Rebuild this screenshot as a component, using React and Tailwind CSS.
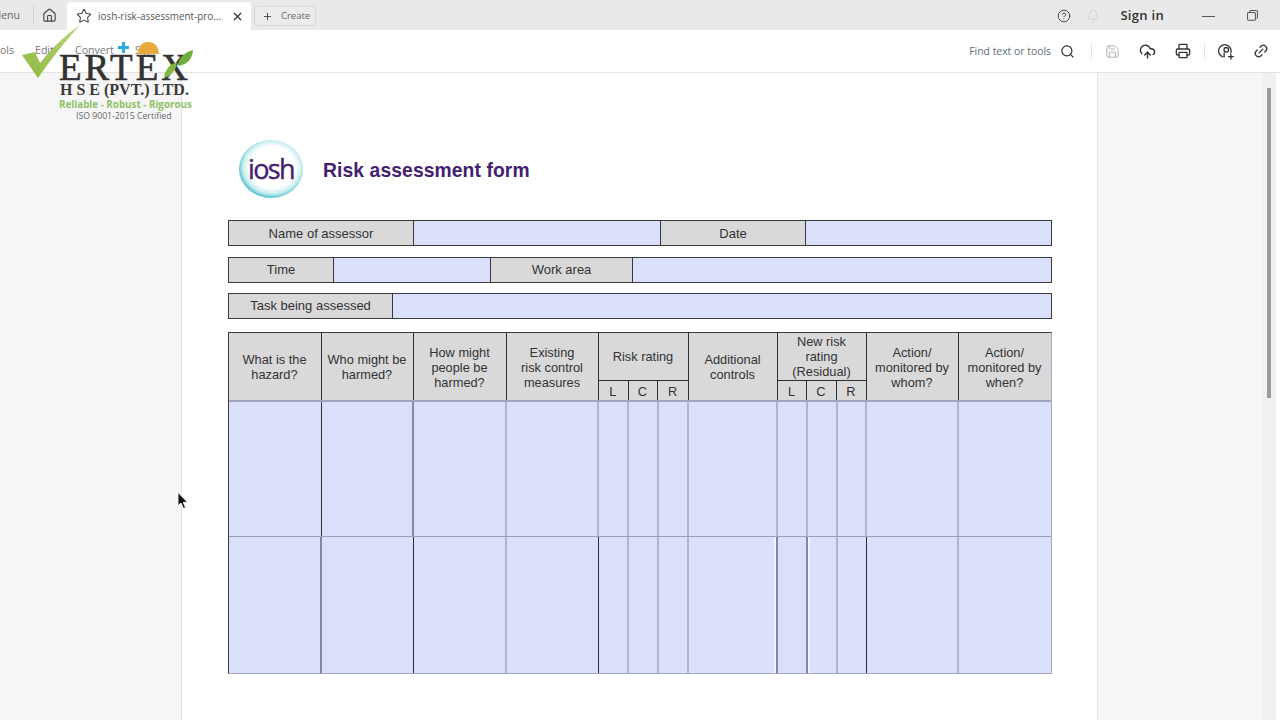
import React from 'react';
import { House, Star, X, Plus, CircleHelp, Bell, Search, Save, CloudUpload, Printer, Link2 } from 'lucide-react';

const headCls = 'flex items-center justify-center bg-[#d9d9d9] text-center border-r border-[#2f2f2f] pt-[1px] pr-[1px] leading-[15px] text-[12.8px] text-[#333]';
const labelCls = 'flex items-center justify-center bg-[#d9d9d9] text-[13px] text-[#333] h-full';
const fieldCls = 'bg-[#dadffa] h-full';

function FormRow({ cols, className, children }) {
  return (
    <div className={`border border-[#3a3a3a] h-[26px] grid ${cols} ${className}`}>
      {children}
    </div>
  );
}

function Toolbar() {
  return (
    <div className="h-[43px] flex items-center bg-white border-b border-[#e3e3e3] text-[10.6px] text-[#777] shrink-0">
      <span className="w-[35px] text-right pr-[21px] overflow-hidden whitespace-nowrap">ols</span>
      <span className="w-[40px]">Edit</span>
      <span className="w-[60px]">Convert</span>
      <span>Sign</span>
      <div className="ml-auto flex items-center text-[#555]">
        <span className="text-[10.4px] pt-[1px] text-[#5f6b73]">Find text or tools</span>
        <Search className="w-[15px] h-[15px] ml-[9px] text-[#333]" strokeWidth={2} />
        <div className="w-px h-[15px] bg-[#e2e2e2] ml-[16px]" />
        <Save className="w-[15px] h-[15px] ml-[13px] text-[#b4b4b4]" strokeWidth={1.6} />
        <CloudUpload className="w-[17px] h-[17px] ml-[19px] text-[#333]" strokeWidth={2} />
        <Printer className="w-[16px] h-[16px] ml-[19px] text-[#333]" strokeWidth={2} />
        <div className="w-px h-[15px] bg-[#e2e2e2] ml-[13px]" />
        <svg viewBox="0 0 18 18" className="w-[17px] h-[17px] ml-[13px]" fill="none" stroke="#333" strokeWidth="1.4" strokeLinecap="round">
          <path d="M13.5 10.5A6.6 6.6 0 1 0 5 14.6" />
          <circle cx="8.8" cy="7.2" r="2.4" />
          <path d="M6.5 10.5v4.2" />
          <path d="M13.7 12v5M11.2 14.5h5" />
        </svg>
        <Link2 className="w-[16px] h-[16px] ml-[18px] mr-[11px] text-[#333] -rotate-45" strokeWidth={2} />
      </div>
    </div>
  );
}

function TabBar() {
  return (
    <div className="h-[30px] flex items-end bg-[#e9e9e9] shrink-0 text-[#555]">
      <div className="h-[30px] flex items-center w-[33px] overflow-hidden justify-end pt-[2px]">
        <span className="text-[10.5px] pr-[13px] text-[#666] whitespace-nowrap">Menu</span>
      </div>
      <div className="w-px h-[18px] bg-[#d2d2d2] mb-[6px]" />
      <div className="w-[30px] h-[30px] flex items-center justify-center pt-[1px]">
        <House className="w-[15px] h-[15px] text-[#444]" strokeWidth={1.8} />
      </div>
      <div className="h-[28px] w-[184px] bg-white rounded-t-[4px] flex items-center ml-[3px] pl-[9px] mt-[2px]">
        <Star className="w-[16px] h-[16px] text-[#444]" strokeWidth={1.6} />
        <span className="ml-[6px] text-[9.9px] text-[#555] whitespace-nowrap w-[125px]">iosh-risk-assessment-pro...</span>
        <X className="ml-[8px] w-[13px] h-[13px] text-[#333]" strokeWidth={2.4} />
      </div>
      <div className="ml-[3px] mb-[4px] h-[20px] w-[62px] border border-[#d8d8d8] rounded-[4px] flex items-center pl-[7px] bg-[#ececec]">
        <Plus className="w-[11px] h-[11px] text-[#444]" strokeWidth={2} />
        <span className="ml-[8px] text-[9.5px] text-[#666]">Create</span>
      </div>
      <div className="ml-auto h-[30px] flex items-center pt-[2px]">
        <CircleHelp className="w-[14px] h-[14px] text-[#444]" strokeWidth={1.6} />
        <Bell className="w-[14px] h-[14px] ml-[15px] text-[#d0d0d0]" strokeWidth={1.6} />
        <span className="ml-[20px] text-[13px] font-semibold tracking-[0.3px] text-[#333]">Sign in</span>
        <div className="ml-[38px] w-[13px] h-px bg-[#555]" />
        <svg viewBox="0 0 12 12" className="ml-[32px] mr-[22px] w-[11px] h-[11px] -mt-[2px]" fill="none" stroke="#555" strokeWidth="1.1">
          <rect x="0.6" y="2.6" width="8.6" height="8.6" rx="1.2" />
          <path d="M3 2.4V1.8A1.2 1.2 0 0 1 4.2 .6h5.9a1.3 1.3 0 0 1 1.3 1.3v5.9A1.2 1.2 0 0 1 10.2 9" />
        </svg>
      </div>
    </div>
  );
}

function IoshLogo() {
  return (
    <div className="relative w-[66px] h-[60px] flex items-center justify-center">
      <svg viewBox="0 0 66 60" className="absolute inset-0 w-full h-full">
        <defs>
          <radialGradient id="ring" cx="52%" cy="47%" r="52%">
            <stop offset="70%" stopColor="#ffffff" />
            <stop offset="88%" stopColor="#c8edef" />
            <stop offset="100%" stopColor="#62c8d2" />
          </radialGradient>
        </defs>
        <ellipse cx="33" cy="29" rx="32" ry="29" fill="url(#ring)" />
      </svg>
      <span className="relative text-[27px] leading-none text-[#44206f] font-['Open_Sans',sans-serif] tracking-[-1.6px] -mt-[4px] [-webkit-text-stroke:0.4px_#44206f]">iosh</span>
    </div>
  );
}

const light = 'border-r-2 border-[#b0b4d3]';
const mid = 'border-r-2 border-[#8488a6]';
const dark = 'border-r border-[#2f2f2f]';

// which vertical lines are dark differs per row in the scan
const rowLines = [
  [dark, mid, light, light, light, light, light, light, light, light, light, light, ''],
  [mid, dark, light, dark, light, light, light, `${mid} shadow-[inset_-2px_0_0_#f1f3ff]`, `${mid} shadow-[2px_0_0_#f1f3ff]`, light, dark, light, ''],
];

function RiskTable() {
  return (
    <div className="border-[1.5px] border-[#3a3a3a] border-b-[#a5a9c6] border-r-[#a5a9c6] w-[824px]">
      <div className="grid grid-cols-[93px_92px_93px_92px_90px_89px_89px_92px_1fr] h-[69px] border-b-2 border-[#a0a4c0]">
        <div className={headCls}>What is the<br />hazard?</div>
        <div className={headCls}>Who might be<br />harmed?</div>
        <div className={headCls}>How might<br />people be<br />harmed?</div>
        <div className={headCls}>Existing<br />risk control<br />measures</div>
        <div className="flex flex-col border-r border-[#2f2f2f]">
          <div className={`${headCls} border-r-0 h-[47px] pb-[2px]`}>Risk rating</div>
          <div className="grid grid-cols-3 flex-1 border-t border-[#2f2f2f]">
            <div className={headCls}>L</div>
            <div className={headCls}>C</div>
            <div className={`${headCls} border-r-0`}>R</div>
          </div>
        </div>
        <div className={headCls}>Additional<br />controls</div>
        <div className="flex flex-col border-r border-[#2f2f2f]">
          <div className={`${headCls} border-r-0 h-[47px] !pt-0`}>New risk<br />rating<br />(Residual)</div>
          <div className="grid grid-cols-3 flex-1 border-t border-[#2f2f2f]">
            <div className={headCls}>L</div>
            <div className={headCls}>C</div>
            <div className={`${headCls} border-r-0`}>R</div>
          </div>
        </div>
        <div className={headCls}>Action/<br />monitored by<br />whom?</div>
        <div className={`${headCls} border-r-0`}>Action/<br />monitored by<br />when?</div>
      </div>
      {rowLines.map((lines, row) => (
        <div
          key={row}
          className={`grid grid-cols-[93px_92px_93px_92px_30px_30px_30px_89px_30px_30px_29px_92px_1fr] bg-[#dadffa] ${row === 0 ? 'h-[135px] border-b border-[#9a9ebc]' : 'h-[136px]'}`}
        >
          {lines.map((c, i) => (
            <div key={i} className={c} />
          ))}
        </div>
      ))}
    </div>
  );
}

function VertexLogo() {
  return (
    <div className="absolute left-[20px] top-[24px] w-[175px] h-[100px]">
      <svg viewBox="0 0 175 100" className="absolute inset-0 w-full h-full">
        <defs>
          <linearGradient id="chk" x1="0" y1="1" x2="1" y2="0">
            <stop offset="0%" stopColor="#8fb83f" />
            <stop offset="100%" stopColor="#b8d67d" />
          </linearGradient>
        </defs>
        <path d="M2 31 L15 28 L20 39 Q37 17 60 1 Q38 25 18 54 Z" fill="url(#chk)" />
        <path d="M102 29 h3 v-4 h4 v-3 h-4 v-4 h-3 v4 h-4 v3 h4 z" fill="#29abe2" />
        <path d="M118 30 Q119 18 128 18 Q138 18 139 30 Z" fill="#e9a93c" />
      </svg>
      <div className="absolute left-[39px] top-[25px] text-[37px] leading-none text-[#333] font-['Liberation_Serif',serif] tracking-[3px] [-webkit-text-stroke:0.6px_#333] whitespace-nowrap">ERTEX</div>
      <svg viewBox="0 0 175 100" className="absolute inset-0 w-full h-full">
        <path d="M144 54 Q145 42 157 38 Q156 50 144 54 Z" fill="#7fb944" />
        <path d="M158 42 Q159 30 173 26 Q172 40 158 42 Z" fill="#6fae3a" />
      </svg>
      <div className="absolute left-[40px] top-[58px] text-[16px] leading-none font-bold text-[#3a3a3a] font-['Liberation_Serif',serif] whitespace-nowrap">H S E (PVT.) LTD.</div>
      <div className="absolute left-[39px] top-[76px] text-[9.8px] leading-none font-bold text-[#8fc265] font-['Open_Sans',sans-serif] whitespace-nowrap">Reliable - Robust - Rigorous</div>
      <div className="absolute left-[56px] top-[88px] text-[8.7px] leading-none text-[#666] font-['Open_Sans',sans-serif] whitespace-nowrap">ISO 9001-2015 Certified</div>
    </div>
  );
}

function Cursor() {
  return (
    <svg viewBox="0 0 12 18" className="absolute left-[177px] top-[491px] w-[12px] h-[19px]">
      <path d="M1 1 V14 L4 11.5 L6.5 17 L8.5 16 L6.2 10.8 H10.5 Z" fill="#111" stroke="#fff" strokeWidth="0.8" />
    </svg>
  );
}

export default function App() {
  return (
    <div className="relative w-[1280px] h-[720px] overflow-hidden flex flex-col bg-white font-['Open_Sans',sans-serif]">
      <TabBar />
      <Toolbar />
      <div className="flex flex-1 min-h-0">
        <div className="w-[182px] bg-[#f6f6f6] border-r border-[#e0e0e0] shrink-0" />
        <div className="w-[915px] bg-white shrink-0 pl-[46px] pt-[67px] font-['Liberation_Sans',sans-serif]">
          <div className="flex items-center pl-[10px] h-[60px]">
            <IoshLogo />
            <h1 className="ml-[19px] pt-[2px] text-[19.3px] font-bold text-[#44206f] tracking-[0.1px]">Risk assessment form</h1>
          </div>
          <FormRow cols="grid-cols-[185px_247px_145px_1fr]" className="w-[824px] mt-[20px]">
            <div className={`${labelCls} pt-[1px] border-r border-[#3a3a3a]`}>Name of assessor</div>
            <div className={`${fieldCls} border-r border-[#3a3a3a]`} />
            <div className={`${labelCls} pt-[1px] border-r border-[#3a3a3a]`}>Date</div>
            <div className={fieldCls} />
          </FormRow>
          <FormRow cols="grid-cols-[105px_157px_142px_1fr]" className="w-[824px] mt-[11px]">
            <div className={`${labelCls} pb-[1px] border-r border-[#3a3a3a]`}>Time</div>
            <div className={`${fieldCls} border-r border-[#3a3a3a]`} />
            <div className={`${labelCls} pb-[1px] border-r border-[#3a3a3a]`}>Work area</div>
            <div className={fieldCls} />
          </FormRow>
          <FormRow cols="grid-cols-[164px_1fr]" className="w-[824px] mt-[10px]">
            <div className={`${labelCls} border-r border-[#3a3a3a]`}>Task being assessed</div>
            <div className={fieldCls} />
          </FormRow>
          <div className="mt-[13px]">
            <RiskTable />
          </div>
        </div>
        <div className="flex-1 bg-[#f6f6f6] border-l border-[#e6e6e6]" />
        <div className="w-[14px] bg-[#f1f1f1] pt-[15px] flex justify-center shrink-0">
          <div className="w-[4px] h-[310px] bg-[#9a9a9a]" />
        </div>
        <div className="w-[4px] bg-white shrink-0" />
      </div>
      <VertexLogo />
      <Cursor />
    </div>
  );
}
